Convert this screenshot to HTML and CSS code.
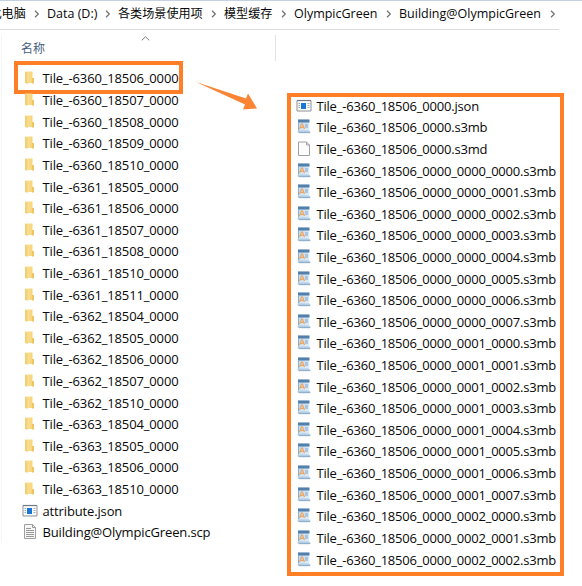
FILE: index.html
```
<!DOCTYPE html>
<html lang="zh-CN">
<head>
<meta charset="utf-8">
<title>Building@OlympicGreen</title>
<link rel="stylesheet" href="styles.css">
</head>
<body>
<svg class="defs" width="0" height="0">
  <defs>
    <linearGradient id="gold" x1="0" x2="1"><stop offset="0" stop-color="#fbe6a4"/><stop offset="1" stop-color="#f6d477"/></linearGradient>
    <linearGradient id="blue" x1="0" x2="1" y1="0" y2="1"><stop offset="0" stop-color="#b9d6ee"/><stop offset="1" stop-color="#e2eff9"/></linearGradient>
  </defs>
  <symbol id="folder" viewBox="0 0 16 16"><path d="M3 1.500h7.500V13H3z" fill="url(#gold)"/><path d="M10 8h2v5.500h-2z" fill="#efc561"/><path d="M3 1.500l2.500 1.200V14L3 13z" fill="#f3cf78"/></symbol>
  <symbol id="json" viewBox="0 0 16 16"><path d="M1 2.500h14v10.500H1z" fill="#fafafa" stroke="#8b9299"/><path d="M1 2.500h14" stroke="#737b83" stroke-width="1.200"/><path d="M5 5h5v6H5z" fill="#1677d8"/><path d="M2.500 5.500H4M2.500 7.500H4M2.500 9.500H4M11.500 5.500h2M11.500 7.500h2M11.500 9.500h2" stroke="#a9adb2"/></symbol>
  <symbol id="scene" viewBox="0 0 16 16"><path d="M2 .5h11l.5 12H2z" fill="url(#blue)"/><path d="M2 .5h11.500v3H2z" fill="#527fab"/><path d="M2 3.500h1v8H2z" fill="#86b0d3"/><path d="M3.500 10l2-5h1l2 5M4.500 8.300h3" fill="none" stroke="#f0a45d" stroke-width="1.200"/><path d="M9 6h3M9 8h3" stroke="#7fa5c8"/><path d="M2 11.500h10c1 0 1.500.5 2.500 1.500v1H3c-1.500 0-2-1-1-2.500z" fill="#b4cce2"/><path d="M3 13.700h11" stroke="#7d9fc0" stroke-width=".8"/></symbol>
  <symbol id="blank" viewBox="0 0 16 16"><path d="M2.500 1h8l3 3v10.500h-11z" fill="#fcfcfc" stroke="#a0a0a0"/><path d="M10.500 1v3h3" fill="none" stroke="#a0a0a0"/></symbol>
  <symbol id="text" viewBox="0 0 16 16"><path d="M2.500 .5h8l3 3v11h-11z" fill="#f6f6f6" stroke="#a0a0a0"/><path d="M10.500 .5v3h3M4 4.500h5M4 6.500h8M4 8.500h8M4 10.500h8M4 12.500h8" fill="none" stroke="#999"/></symbol>
  <symbol id="chev" viewBox="0 0 6 8"><path d="M1 .8L4.300 4 1 7.200" fill="none" stroke="#707070" stroke-width="1.200"/></symbol>
</svg>
<main class="window">
  <nav class="crumbs">
    <span class="crumb pc">此电脑</span><svg class="chev"><use href="#chev"/></svg>
    <span class="crumb data">Data (D:)</span><svg class="chev"><use href="#chev"/></svg>
    <span class="crumb usage">各类场景使用项</span><svg class="chev"><use href="#chev"/></svg>
    <span class="crumb cache">模型缓存</span><svg class="chev"><use href="#chev"/></svg>
    <span class="crumb olympic">OlympicGreen</span><svg class="chev"><use href="#chev"/></svg>
    <span class="crumb building">Building@OlympicGreen</span><svg class="chev"><use href="#chev"/></svg>
  </nav>
  <div class="content">
    <section class="left">
      <header class="column-head"><span>名称</span><svg class="sort" viewBox="0 0 9 5"><path d="M.8 4.300L4.500.8l3.700 3.500" fill="none" stroke="#777"/></svg></header>
      <ul class="files" id="folders"></ul>
    </section>
    <section class="right">
      <ul class="files" id="tiles"></ul>
    </section>
  </div>
  <svg class="arrow" viewBox="0 0 62 30"><path d="M0 0L50 16.500l2-5L61 26.500l-14 1 2-5z" fill="#fa8434"/></svg>
</main>
<script src="files.js"></script>
</body>
</html>
```
FILE: styles.css
```
body {
  margin: 0;
  background: #fff;
  color: #080808;
  font: 13px/20px "Open Sans", "Noto Sans CJK SC", sans-serif;
}
.defs { position: absolute; }
.window {
  position: relative;
  box-sizing: border-box;
  width: 582px;
  height: 586px;
  overflow: hidden;
  border-top: 1px solid #c5d0e2;
}
.crumbs {
  display: flex;
  align-items: center;
  box-sizing: border-box;
  width: 559px;
  height: 29px;
  padding-bottom: 2px;
  border-bottom: 1px solid #dadada;
  white-space: nowrap;
}
.crumb { flex: none; font-size: 12.5px; }
.chev { flex: none; width: 6px; height: 8px; }
.pc { width: 44.500px; margin-left: -10.500px; font-size: 12.1px; }
.data { width: 50px; margin-left: 7px; margin-right: 8px; }
.usage { width: 85px; margin-left: 7px; margin-right: 8px; font-size: 12.1px; }
.cache { width: 49px; margin-left: 7px; margin-right: 8px; font-size: 12.1px; }
.olympic { width: 84px; margin-left: 7px; margin-right: 8px; }
.building { width: 143px; margin-left: 7px; margin-right: 8px; }
.content { display: flex; align-items: flex-start; }
.left {
  width: 274px;
  margin: 5px 11px 0 1px;
  border-left: 1px solid #f5f5f5;
}
.column-head {
  display: flex;
  box-sizing: border-box;
  height: 26px;
  padding: 4px 0 0 19px;
  border-right: 1px solid #e3e3e3;
  color: #465f7c;
  font-size: 12px;
}
.sort { width: 9px; height: 5px; margin-left: 96px; margin-top: -3px; }
.files { margin: 0; padding: 0; list-style: none; }
.left .files { padding: 6.7px 0 0 20px; }
.right {
  box-sizing: border-box;
  width: 277px;
  height: 483px;
  margin-top: 63px;
  padding-left: 5px;
  border: 4px solid #ff7f27;
}
.right .files { margin-top: -2.1px; }
.file {
  position: relative;
  display: flex;
  align-items: center;
  height: 21.62px;
  white-space: nowrap;
}
.icon { flex: none; width: 16px; height: 16px; margin-right: 4.500px; }
.name { letter-spacing: -.14px; }
.right .name { letter-spacing: -.2px; }
.picked::before {
  content: "";
  position: absolute;
  left: -8px;
  top: -6.700px;
  box-sizing: border-box;
  width: 169px;
  height: 33px;
  border: 4px solid #ff7f27;
}
.arrow {
  position: absolute;
  left: 196px;
  top: 81px;
  width: 62px;
  height: 30px;
}
```
FILE: files.js
```
const folderIds = [
  '6360_18506', '6360_18507', '6360_18508', '6360_18509', '6360_18510',
  '6361_18505', '6361_18506', '6361_18507', '6361_18508', '6361_18510', '6361_18511',
  '6362_18504', '6362_18505', '6362_18506', '6362_18507', '6362_18510',
  '6363_18504', '6363_18505', '6363_18506', '6363_18510'
];
const root = 'Tile_-6360_18506_0000';
const left = folderIds.map(id => ['folder', `Tile_-${id}_0000`]);
left.push(['json', 'attribute.json'], ['text', 'Building@OlympicGreen.scp']);

const right = [['json', `${root}.json`], ['scene', `${root}.s3mb`], ['blank', `${root}.s3md`]];
for (let i = 0; i < 19; i++) {
  right.push(['scene', `${root}_000${Math.floor(i / 8)}_000${i % 8}.s3mb`]);
}

function render(listId, files) {
  document.getElementById(listId).innerHTML = files.map(([icon, name]) =>
    `<li class="file"><svg class="icon"><use href="#${icon}"/></svg><span class="name">${name}</span></li>`
  ).join('');
}
render('folders', left);
render('tiles', right);
document.querySelector('#folders .file').classList.add('picked');
```
